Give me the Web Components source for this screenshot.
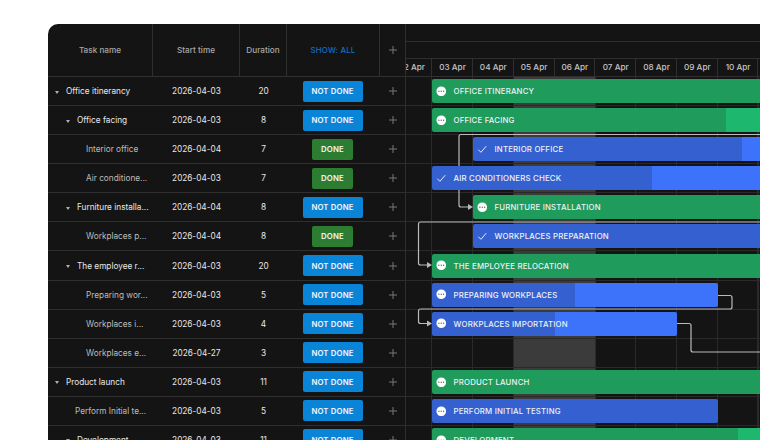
<!DOCTYPE html>
<html>
<head>
<meta charset="utf-8">
<style>
    html, body { margin: 0; background: #fff; overflow: hidden; height: 100%; }
    body { font-family: Inter, "Noto Sans", sans-serif; }
</style>
</head>
<body>
<gantt-chart>
    <task-grid slot="grid">
        <task-row name="Office itinerancy" level="0" open start="2026-04-03" days="20" status="NOT DONE"></task-row>
        <task-row name="Office facing" level="1" open start="2026-04-03" days="8" status="NOT DONE"></task-row>
        <task-row name="Interior office" level="2" start="2026-04-04" days="7" status="DONE"></task-row>
        <task-row name="Air conditione..." level="2" start="2026-04-03" days="7" status="DONE"></task-row>
        <task-row name="Furniture installa..." level="1" open start="2026-04-04" days="8" status="NOT DONE"></task-row>
        <task-row name="Workplaces p..." level="2" start="2026-04-04" days="8" status="DONE"></task-row>
        <task-row name="The employee r..." level="1" open start="2026-04-03" days="20" status="NOT DONE"></task-row>
        <task-row name="Preparing wor..." level="2" start="2026-04-03" days="5" status="NOT DONE"></task-row>
        <task-row name="Workplaces i..." level="2" start="2026-04-03" days="4" status="NOT DONE"></task-row>
        <task-row name="Workplaces e..." level="2" start="2026-04-27" days="3" status="NOT DONE"></task-row>
        <task-row name="Product launch" level="0" open start="2026-04-03" days="11" status="NOT DONE"></task-row>
        <task-row name="Perform Initial te..." level="3" start="2026-04-03" days="5" status="NOT DONE"></task-row>
        <task-row name="Development" level="1" open start="2026-04-03" days="11" status="NOT DONE"></task-row>
    </task-grid>
    <gantt-timeline slot="timeline">
        <gantt-bar kind="project" icon="dots" left="432" width="340">OFFICE ITINERANCY</gantt-bar>
        <gantt-bar kind="project" icon="dots" left="432" width="340" done="294">OFFICE FACING</gantt-bar>
        <gantt-bar kind="task" icon="check" left="473" width="300" done="269.5">INTERIOR OFFICE</gantt-bar>
        <gantt-bar kind="task" icon="check" left="432" width="340" done="220">AIR CONDITIONERS CHECK</gantt-bar>
        <gantt-bar kind="project" icon="dots" left="473" width="300">FURNITURE INSTALLATION</gantt-bar>
        <gantt-bar kind="task" icon="check" left="473" width="300">WORKPLACES PREPARATION</gantt-bar>
        <gantt-bar kind="project" icon="dots" left="432" width="340">THE EMPLOYEE RELOCATION</gantt-bar>
        <gantt-bar kind="task" icon="dots" left="432" width="285.5" done="143">PREPARING WORKPLACES</gantt-bar>
        <gantt-bar kind="task" icon="dots" left="432" width="245" done="123">WORKPLACES IMPORTATION</gantt-bar>
        <gantt-bar></gantt-bar>
        <gantt-bar kind="project" icon="dots" left="432" width="340">PRODUCT LAUNCH</gantt-bar>
        <gantt-bar kind="task" icon="dots" left="432" width="285.5">PERFORM INITIAL TESTING</gantt-bar>
        <gantt-bar kind="project" icon="dots" left="432" width="340" done="306">DEVELOPMENT</gantt-bar>
    </gantt-timeline>
</gantt-chart>

<script>
class GanttChart extends HTMLElement {
    constructor() {
        super();
        this.attachShadow({ mode: 'open' });
    }
    connectedCallback() {
        this.shadowRoot.innerHTML = `
        <style>
            :host {
                display: flex;
                width: 712px;
                height: 416px;
                margin: 24px 0 0 48px;
                background: #141414;
                border-radius: 10px 0 0 0;
                overflow: hidden;
                color: #e8e8e8;
                font-size: 8.25px;
                font-weight: 400;
            }
        </style>
        <slot name="grid"></slot>
        <slot name="timeline"></slot>
        `;
    }
}

class TaskGrid extends HTMLElement {
    constructor() {
        super();
        this.attachShadow({ mode: 'open' });
    }
    connectedCallback() {
        this.shadowRoot.innerHTML = `
        <style>
            :host {
                display: block;
                flex: none;
                width: 358px;
                box-sizing: border-box;
                border-right: 1px solid #2f2f2f;
            }
            .head {
                display: grid;
                grid-template-columns: 105px 87px 47px 93px 1fr;
                height: 53px;
                box-sizing: border-box;
                border-bottom: 1px solid #2f2f2f;
                color: #a8a8a8;
                font-size: 8.2px;
                font-weight: 500;
            }
            .head div {
                display: flex;
                align-items: center;
                justify-content: center;
                border-right: 1px solid #2f2f2f;
            }
            .head div:last-child { border-right: 0; }
            .show { color: #1171c4; font-size: 7.8px; letter-spacing: .2px; }
            svg { width: 8px; height: 8px; }
        </style>
        <div class="head">
            <div>Task name</div>
            <div>Start time</div>
            <div>Duration</div>
            <div class="show">SHOW: ALL</div>
            <div><svg viewBox="0 0 8 8"><path d="M4 0v8M0 4h8" stroke="#777" fill="none"/></svg></div>
        </div>
        <slot></slot>
        `;
    }
}

class TaskRow extends HTMLElement {
    constructor() {
        super();
        this.attachShadow({ mode: 'open' });
    }
    connectedCallback() {
        const indent = { 0: 18, 1: 29, 2: 38, 3: 27 }[this.getAttribute('level')];
        const status = this.getAttribute('status');
        const open = this.hasAttribute('open');
        this.shadowRoot.innerHTML = `
        <style>
            :host {
                display: grid;
                grid-template-columns: 105px 87px 47px 93px 1fr;
                height: 29.08px;
                box-sizing: border-box;
                border-bottom: 1px solid #2f2f2f;
                align-items: center;
                text-align: center;
            }
            .name {
                position: relative;
                text-align: left;
                padding-left: ${indent}px;
                white-space: nowrap;
                min-width: 0;
                color: ${open ? '#e8e8e8' : '#bcbcbc'};
            }
            .arrow {
                position: absolute;
                left: ${indent - 11.5}px;
                top: 4.5px;
                width: 0;
                height: 0;
                border: 2.8px solid transparent;
                border-top: 3px solid #b0b0b0;
                border-bottom: 0;
            }
            .pill {
                justify-self: center;
                display: flex;
                align-items: center;
                justify-content: center;
                height: 21px;
                margin-right: 2px;
                border-radius: 2px;
                color: #f2f7fb;
                font-size: 7.8px;
                font-weight: 600;
                letter-spacing: .15px;
            }
            .not { width: 60px; background: #0a84d6; }
            .done { width: 41px; background: #2c7d32; }
            .add { display: flex; justify-content: center; }
            svg { width: 8px; height: 8px; }
        </style>
        <div class="name">${open ? '<span class="arrow"></span>' : ''}${this.getAttribute('name')}</div>
        <div>${this.getAttribute('start')}</div>
        <div>${this.getAttribute('days')}</div>
        <div class="pill ${status === 'DONE' ? 'done' : 'not'}">${status}</div>
        <div class="add"><svg viewBox="0 0 8 8"><path d="M4 0v8M0 4h8" stroke="#777" fill="none"/></svg></div>
        `;
    }
}

class GanttTimeline extends HTMLElement {
    constructor() {
        super();
        this.attachShadow({ mode: 'open' });
    }
    connectedCallback() {
        // first tick sits at 391.3 on the page, 14.7 before the timeline starts
        const days = ['02', '03', '04', '05', '06', '07', '08', '09', '10', '11'];
        this.shadowRoot.innerHTML = `
        <style>
            :host {
                display: block;
                flex: 1;
                min-width: 0;
                position: relative;
                overflow: hidden;
            }
            .scale { height: 17.500px; border-bottom: 1px solid #2f2f2f; box-sizing: border-box; }
            .days-wrap { height: 18px; border-bottom: 1px solid #2f2f2f; box-sizing: border-box; }
            .days {
                display: flex;
                margin-left: -14.7px;
                color: #c4c4c4;
                font-size: 8.2px;
                font-weight: 500;
            }
            .days span {
                flex: none;
                width: 40.8px;
                height: 17px;
                line-height: 17px;
                box-sizing: border-box;
                padding-left: 1px;
                text-align: center;
                border-right: 1px solid #2f2f2f;
            }
            .body {
                position: relative;
                height: 378px;
                background:
                    linear-gradient(#3b3b3b, #3b3b3b) 108.3px 0 / 81.6px 100% no-repeat,
                    repeating-linear-gradient(90deg, transparent 0 25.1px, #2a2a2a 25.1px 26.1px, transparent 26.1px 40.8px);
            }
            svg {
                position: absolute;
                left: 0;
                top: 0;
                width: 354px;
                height: 364px;
                z-index: 1;
                pointer-events: none;
            }
            path { fill: none; stroke: #bababa; stroke-width: 1.2; }
            .tip { fill: #bababa; stroke: none; }
            slot { display: block; }
        </style>
        <div class="scale"></div>
        <div class="scale"></div>
        <div class="days-wrap"><div class="days">${days.map(d => `<span>${d} Apr</span>`).join('')}</div></div>
        <div class="body">
            <svg viewBox="406 77 354 364">
                <path d="M760 134.500H461a2 2 0 0 0-2 2V205a2 2 0 0 0 2 2h8"/>
                <path class="tip" d="M468 204l5 3-5 3z"/>
                <path d="M760 222H420.500a2 2 0 0 0-2 2V263a2 2 0 0 0 2 2h8"/>
                <path class="tip" d="M427 262l5 3-5 3z"/>
                <path d="M717 295.500H730a2 2 0 0 1 2 2V307a2 2 0 0 1-2 2H420.500a2 2 0 0 0-2 2v10.500a2 2 0 0 0 2 2h8"/>
                <path class="tip" d="M427 320.500l5 3-5 3z"/>
                <path d="M677 323.500h12a2 2 0 0 1 2 2V350a2 2 0 0 0 2 2h67"/>
            </svg>
            <slot></slot>
        </div>
        `;
    }
}

class GanttBar extends HTMLElement {
    constructor() {
        super();
        this.attachShadow({ mode: 'open' });
    }
    connectedCallback() {
        // left is the page x of the bar, the timeline starts at 406
        const left = (+this.getAttribute('left') || 406) - 406;
        const width = +this.getAttribute('width') || 0;
        const project = this.getAttribute('kind') === 'project';
        const done = this.getAttribute('done');
        const dark = project ? '#1f9b5c' : '#3461cf';
        const light = project ? '#1db76d' : '#3d72fb';
        const icon = this.getAttribute('icon') === 'check'
            ? '<svg viewBox="0 0 12 12"><path d="M1.500 6.500l3 3 6-7" fill="none" stroke="#fff" stroke-width="1"/></svg>'
            : '<svg viewBox="0 0 12 12"><circle cx="6" cy="6" r="5.500" fill="#fff"/><circle cx="3.300" cy="6" r=".8" fill="#666"/><circle cx="6" cy="6" r=".8" fill="#666"/><circle cx="8.700" cy="6" r=".8" fill="#666"/></svg>';
        this.shadowRoot.innerHTML = `
        <style>
            :host {
                display: flex;
                align-items: center;
                height: 29.08px;
                box-sizing: border-box;
                border-bottom: 1px solid #2a2a2a;
            }
            .bar {
                position: relative;
                z-index: 2;
                flex: none;
                display: flex;
                align-items: center;
                gap: 7.500px;
                box-sizing: border-box;
                height: 24px;
                margin-left: ${left}px;
                width: ${width}px;
                padding-left: 3.500px;
                border-radius: 2px;
                background: ${done ? `linear-gradient(90deg, ${dark} ${done}px, ${light} ${done}px)` : dark};
                color: #eef1f6;
                font-size: 7.8px;
                font-weight: 500;
                letter-spacing: .2px;
                white-space: nowrap;
            }
            svg { width: 10.500px; height: 10.500px; flex: none; }
        </style>
        ${width ? `<div class="bar">${icon}<slot></slot></div>` : ''}
        `;
    }
}

customElements.define('gantt-chart', GanttChart);
customElements.define('task-grid', TaskGrid);
customElements.define('task-row', TaskRow);
customElements.define('gantt-timeline', GanttTimeline);
customElements.define('gantt-bar', GanttBar);
</script>
</body>
</html>
